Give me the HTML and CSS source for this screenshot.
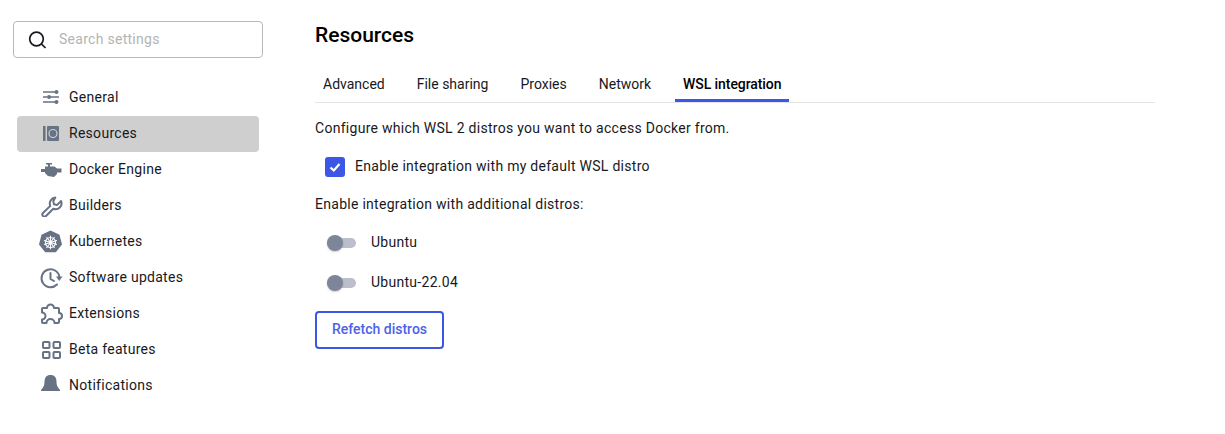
FILE: index.html
```html
<!DOCTYPE html>
<html lang="en">
<head>
<meta charset="utf-8">
<title>Resources</title>
<link rel="stylesheet" href="styles.css">
</head>
<body>
<div class="app">
  <aside class="sidebar">
    <div class="search">
      <svg class="search-icon" viewBox="0 0 20 20" width="20" height="20"><circle cx="8.500" cy="9" r="6.800"/><path d="M13.500 14 17.500 18"/></svg>
      <span class="search-text">Search settings</span>
    </div>
    <nav class="nav">
      <div class="nav-item"><span class="nav-icon"><svg viewBox="0 0 24 24" width="24" height="24"><path class="ln" d="M4 7h13M4 12h4M9 12h11M4 17h13"/><circle class="fl" cx="17.500" cy="7" r="2"/><circle class="fl" cx="10" cy="12" r="2"/><circle class="fl" cx="17.500" cy="17" r="2"/></svg></span><span>General</span></div>
      <div class="nav-item active"><span class="nav-icon"><svg viewBox="0 0 24 24" width="24" height="24"><rect class="fl" x="4" y="5" width="2.500" height="15"/><rect class="fl" x="8" y="5" width="12" height="15" rx="1"/><circle cx="14" cy="12.500" r="4" fill="none" stroke="#cfcfcf" stroke-width="1.200"/></svg></span><span>Resources</span></div>
      <div class="nav-item"><span class="nav-icon"><svg viewBox="0 0 24 24" width="24" height="24"><path class="fl" d="M7 6h6v1.500h-2v2h4.500L18 11.500V17l-3 3-6-1-3-3v-6.500h3V7.500H7zM2 12h4v3H2zM18 11.500h4.500v4H18z"/></svg></span><span>Docker Engine</span></div>
      <div class="nav-item"><span class="nav-icon"><svg viewBox="0 0 24 24" width="24" height="24"><path class="ln2" d="M16.300 4.500a6 6 0 0 0-5 8.400L4 20a2.100 2.100 0 0 0 3 3l7.300-7.200a6 6 0 0 0 7.800-7.800l-3.900 3.900-3.300-.6-.6-3.300z"/></svg></span><span>Builders</span></div>
      <div class="nav-item"><span class="nav-icon"><svg viewBox="0 0 24 24" width="24" height="24"><path class="fl" d="M11.500 1.500 20.500 5.700l2.500 9.700-6.200 7.900H6.200L0 15.400 2.500 5.700z"/><g fill="none" stroke="#fff" stroke-width="1.100"><circle cx="11.500" cy="13.500" r="5"/><path d="M11.500 6.800v13.400M5 11.400l13 4.200M18 11.400 5 15.600M7.500 8l8 11M15.500 8l-8 11"/></g></svg></span><span>Kubernetes</span></div>
      <div class="nav-item"><span class="nav-icon"><svg viewBox="0 0 24 24" width="24" height="24"><path class="ln2" d="M20.500 12.500A9 9 0 1 0 18 19.500M11.500 8v6l3.500 2"/><path class="fl" d="M17 11.500h6.500L20.200 16z"/></svg></span><span>Software updates</span></div>
      <div class="nav-item"><span class="nav-icon"><svg viewBox="0 0 24 24" width="24" height="24"><path class="ln2" d="M8 7a3.500 3.500 0 1 1 7 0H19a1 1 0 0 1 1 1v4a3 3 0 1 1 0 6v3a1 1 0 0 1-1 1h-3.500a4 4 0 0 0-8 0H4a1 1 0 0 1-1-1v-2.500a3.500 3.500 0 0 0 0-7V8a1 1 0 0 1 1-1z"/></svg></span><span>Extensions</span></div>
      <div class="nav-item"><span class="nav-icon"><svg viewBox="0 0 24 24" width="24" height="24"><rect class="ln2" x="4" y="5" width="6.500" height="6" rx="1"/><rect class="ln2" x="14.500" y="5" width="6.500" height="6" rx="1"/><rect class="ln2" x="4" y="15" width="6.500" height="6" rx="1"/><rect class="ln2" x="14.500" y="15" width="6.500" height="6" rx="1"/></svg></span><span>Beta features</span></div>
      <div class="nav-item"><span class="nav-icon"><svg viewBox="0 0 24 24" width="24" height="24"><path class="fl" d="M11.500 2c4 0 6 2.500 6 7 0 3 1 5.500 3.500 8v1H2v-1c2.500-2.500 3.500-5 3.500-8 0-4.500 2-7 6-7z"/></svg></span><span>Notifications</span></div>
    </nav>
  </aside>
  <main class="main">
    <h1 class="title">Resources</h1>
    <div class="tabs">
      <div class="tab">Advanced</div>
      <div class="tab">File sharing</div>
      <div class="tab">Proxies</div>
      <div class="tab">Network</div>
      <div class="tab selected">WSL integration</div>
    </div>
    <p class="intro">Configure which WSL 2 distros you want to access Docker from.</p>
    <div class="check-row">
      <span class="checkbox"><svg viewBox="0 0 20 20" width="20" height="20"><path d="M5.500 10.500 8.800 13.500 14.500 7"/></svg></span>
      <span>Enable integration with my default WSL distro</span>
    </div>
    <p class="additional">Enable integration with additional distros:</p>
    <div class="switches">
      <div class="switch-row"><span class="switch"><span class="thumb"></span></span><span class="switch-label">Ubuntu</span></div>
      <div class="switch-row"><span class="switch"><span class="thumb"></span></span><span class="switch-label">Ubuntu-22.04</span></div>
    </div>
    <button class="refetch" type="button">Refetch distros</button>
  </main>
</div>
</body>
</html>
```
FILE: styles.css
```css
html, body { margin: 0; padding: 0; background: #fff; }
body { font-family: Roboto, "Liberation Sans", sans-serif; font-size: 14px; line-height: 20px; color: #17191e; letter-spacing: .28px; }
.app { display: flex; width: 1225px; height: 434px; overflow: hidden; }
.sidebar { width: 250px; margin-left: 13px; padding-top: 21px; flex: none; }
.search { box-sizing: border-box; height: 37px; border: 1px solid #b9b9b9; border-radius: 4px; display: flex; align-items: center; padding-left: 14px; }
.search-icon { fill: none; stroke: #17191e; stroke-width: 1.700; flex: none; }
.search-text { margin-left: 11px; padding-bottom: 2px; color: #b4b4b4; }
.nav { margin: 21px 4px 0; display: flex; flex-direction: column; }
.nav-item { box-sizing: border-box; height: 36px; display: flex; align-items: center; border-radius: 4px; padding-left: 22px; }
.nav-item.active { background: #cfcfcf; margin-top: 1px; margin-bottom: -1px; padding-bottom: 2px; }
.nav-icon { width: 24px; height: 24px; margin-right: 6px; display: flex; align-items: center; justify-content: center; flex: none; }
.fl { fill: #677285; }
.ln { fill: none; stroke: #677285; stroke-width: 1.500; }
.ln2 { fill: none; stroke: #677285; stroke-width: 2; stroke-linejoin: round; stroke-linecap: round; }
.main { margin-left: 52px; width: 840px; padding-top: 22px; }
.title { margin: 0; font-size: 21px; line-height: 26px; font-weight: 500; letter-spacing: 0; color: #000; }
.tabs { display: flex; margin-top: 14px; height: 41px; box-sizing: border-box; border-bottom: 1px solid #e4e4e4; gap: 16px; letter-spacing: 0; }
.tab { padding: 12px 8px 0; box-sizing: border-box; height: 40px; white-space: nowrap; }
.tab.selected { border-bottom: 3px solid #3c57e5; font-weight: 500; color: #000; letter-spacing: -.08px; }
.intro { margin: 15px 0 0; }
.check-row { display: flex; align-items: center; margin: 18px 0 0 10px; gap: 10px; height: 20px; }
.checkbox { width: 20px; height: 20px; margin-top: 2px; border-radius: 3px; background: #3c57e5; display: block; flex: none; }
.checkbox svg { display: block; fill: none; stroke: #fff; stroke-width: 2.200; }
.additional { margin: 18px 0 0; }
.switches { margin: 9px 0 0 12px; }
.switch-row { display: flex; align-items: center; height: 40px; gap: 15px; }
.switch-label { padding-bottom: 2px; }
.switch { width: 29px; height: 10px; background: #bcbfcb; border-radius: 5px; display: flex; align-items: center; flex: none; }
.thumb { width: 16px; height: 16px; background: #7d8598; border-radius: 50%; box-shadow: 0 1px 2px rgba(0,0,0,.2); }
.refetch { display: block; margin-top: 8px; width: 129px; height: 38px; background: #fff; border: 2px solid #3c57e5; border-radius: 4px; color: #4a63e8; font: 500 14px/20px Roboto, "Liberation Sans", sans-serif; padding: 0 0 2px; }
```
